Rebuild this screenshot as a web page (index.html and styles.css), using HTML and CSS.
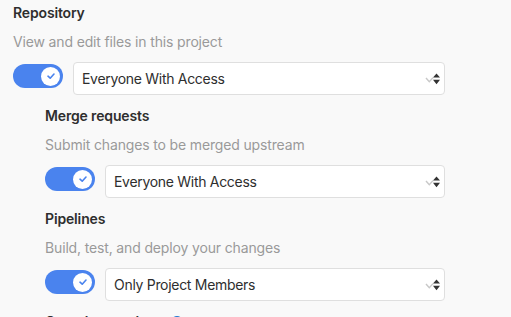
FILE: index.html
```html
<!DOCTYPE html>
<html lang="en">
<head>
<meta charset="utf-8">
<link rel="stylesheet" href="styles.css">
</head>
<body>
<div class="settings">
  <section class="feature">
    <h4 class="feature-title">Repository</h4>
    <p class="feature-desc">View and edit files in this project</p>
    <div class="control-row">
      <span class="toggle"><span class="knob"><svg width="10" height="8" viewBox="0 0 10 8"><path d="M2 4.2 L4.2 6.2 L8 2" fill="none" stroke="#4a83ee" stroke-width="1.6" stroke-linecap="round" stroke-linejoin="round"/></svg></span></span>
      <div class="select"><span class="select-text">Everyone With Access</span><svg class="arrow" width="17" height="12" viewBox="0 0 17 12"><path d="M3 5 L6.3 8.8 L10 4.6" fill="none" stroke="#c8c8c8" stroke-width="1.4"/><path d="M13.5 0.5 L17 4.5 L10 4.5 Z M10 6.8 L17 6.8 L13.5 11.3 Z" fill="#333"/></svg></div>
    </div>
    <div class="sub-features">
      <section class="feature">
        <h4 class="feature-title">Merge requests</h4>
        <p class="feature-desc">Submit changes to be merged upstream</p>
        <div class="control-row">
          <span class="toggle"><span class="knob"><svg width="10" height="8" viewBox="0 0 10 8"><path d="M2 4.2 L4.2 6.2 L8 2" fill="none" stroke="#4a83ee" stroke-width="1.6" stroke-linecap="round" stroke-linejoin="round"/></svg></span></span>
          <div class="select"><span class="select-text">Everyone With Access</span><svg class="arrow" width="17" height="12" viewBox="0 0 17 12"><path d="M3 5 L6.3 8.8 L10 4.6" fill="none" stroke="#c8c8c8" stroke-width="1.4"/><path d="M13.5 0.5 L17 4.5 L10 4.5 Z M10 6.8 L17 6.8 L13.5 11.3 Z" fill="#333"/></svg></div>
        </div>
      </section>
      <section class="feature">
        <h4 class="feature-title">Pipelines</h4>
        <p class="feature-desc">Build, test, and deploy your changes</p>
        <div class="control-row">
          <span class="toggle"><span class="knob"><svg width="10" height="8" viewBox="0 0 10 8"><path d="M2 4.2 L4.2 6.2 L8 2" fill="none" stroke="#4a83ee" stroke-width="1.6" stroke-linecap="round" stroke-linejoin="round"/></svg></span></span>
          <div class="select"><span class="select-text">Only Project Members</span><svg class="arrow" width="17" height="12" viewBox="0 0 17 12"><path d="M3 5 L6.3 8.8 L10 4.6" fill="none" stroke="#c8c8c8" stroke-width="1.4"/><path d="M13.5 0.5 L17 4.5 L10 4.5 Z M10 6.8 L17 6.8 L13.5 11.3 Z" fill="#333"/></svg></div>
        </div>
      </section>
      <section class="feature">
        <h4 class="feature-title">Container registry <svg class="help" width="12" height="12" viewBox="0 0 12 12"><circle cx="6" cy="6" r="6" fill="#1f78d1"/></svg></h4>
      </section>
    </div>
  </section>
</div>
</body>
</html>
```
FILE: styles.css
```css
* { box-sizing: border-box; }
html, body { margin: 0; padding: 0; }
body {
  background: #f9f9f9;
  font-family: Inter, "Noto Sans", sans-serif;
  font-size: 14px;
  letter-spacing: -0.15px;
  color: #2e2e2e;
  overflow: hidden;
  height: 317px;
}
.settings {
  width: 445px;
  padding: 3px 0 0 13px;
}
.feature {
  display: flex;
  flex-direction: column;
}
.feature-title {
  margin: 0;
  font-size: 14px;
  font-weight: 600;
  line-height: 20px;
  color: #2e2e2e;
  display: flex;
  align-items: center;
  gap: 6px;
}
.feature-desc {
  margin: 9px 0 0;
  line-height: 20px;
  color: #9a9a9a;
}
.control-row {
  margin-top: 10px;
  display: flex;
  align-items: flex-start;
  gap: 10px;
}
.toggle {
  flex: none;
  width: 50px;
  height: 24px;
  margin-top: 2px;
  border-radius: 12px;
  background: #4a83ee;
  display: flex;
  align-items: center;
  justify-content: flex-end;
  padding-right: 3px;
}
.knob {
  width: 19px;
  height: 19px;
  border-radius: 50%;
  background: #fff;
  display: flex;
  align-items: center;
  justify-content: center;
}
.select {
  flex: 1;
  height: 33px;
  background: #fff;
  border: 1px solid #dfdfdf;
  border-radius: 4px;
  display: flex;
  align-items: center;
  justify-content: space-between;
  padding: 0 4px 0 8px;
  color: #2e2e2e;
}
.select-text { letter-spacing: -0.3px; }
.arrow { flex: none; }
.sub-features {
  padding-left: 32px;
  display: flex;
  flex-direction: column;
}
.feature + .feature, .sub-features {
  margin-top: 11px;
}
.help { flex: none; }
```
